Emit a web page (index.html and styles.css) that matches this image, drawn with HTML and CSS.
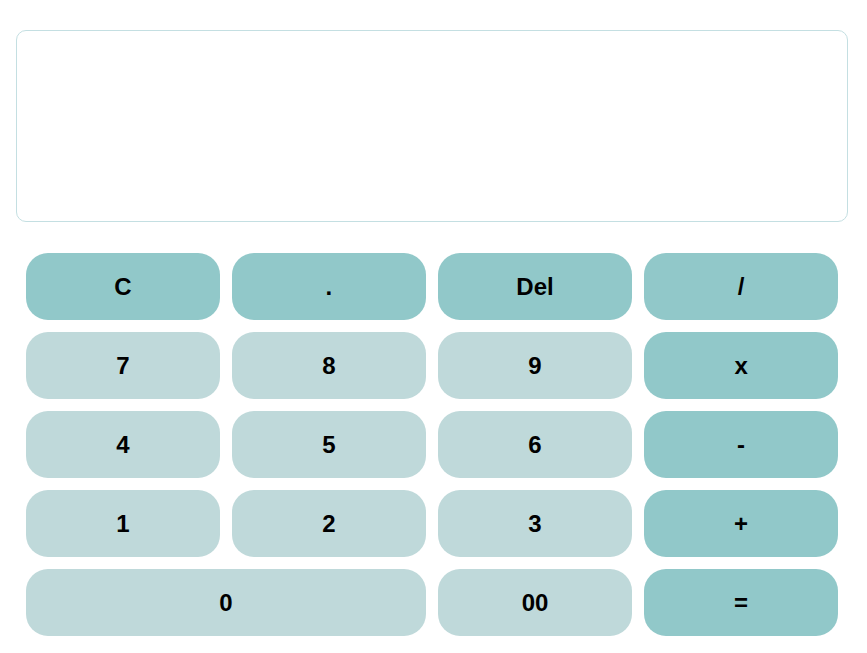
FILE: index.html
```html
<!DOCTYPE html>
<html>
<head>
<meta charset="utf-8">
<link rel="stylesheet" href="styles.css">
</head>
<body>
<div class="calc">
  <div class="display"></div>
  <div class="keys">
    <button class="key op">C</button>
    <button class="key op">.</button>
    <button class="key op">Del</button>
    <button class="key op">/</button>
    <button class="key">7</button>
    <button class="key">8</button>
    <button class="key">9</button>
    <button class="key op">x</button>
    <button class="key">4</button>
    <button class="key">5</button>
    <button class="key">6</button>
    <button class="key op">-</button>
    <button class="key">1</button>
    <button class="key">2</button>
    <button class="key">3</button>
    <button class="key op">+</button>
    <button class="key wide">0</button>
    <button class="key">00</button>
    <button class="key op">=</button>
  </div>
</div>
</body>
</html>
```
FILE: styles.css
```css
html, body {
  margin: 0;
  padding: 0;
  background: #ffffff;
}
body {
  font-family: "Liberation Sans", Arial, sans-serif;
}
.calc {
  padding: 30px 19px 0 16px;
}
.display {
  height: 190px;
  border: 1px solid #c4dfe2;
  border-radius: 10px;
  background: #ffffff;
}
.keys {
  display: grid;
  grid-template-columns: repeat(4, 1fr);
  grid-auto-rows: 67px;
  column-gap: 12.3px;
  row-gap: 12px;
  margin: 31px 10px 0 10px;
}
.key {
  border: none;
  border-radius: 22px;
  background: #bfd9da;
  color: #000000;
  font-family: "Liberation Sans", Arial, sans-serif;
  font-weight: bold;
  font-size: 24px;
  padding: 0;
  margin: 0;
}
.key.op {
  background: #91c8c9;
}
.key.wide {
  grid-column: span 2;
}
```
